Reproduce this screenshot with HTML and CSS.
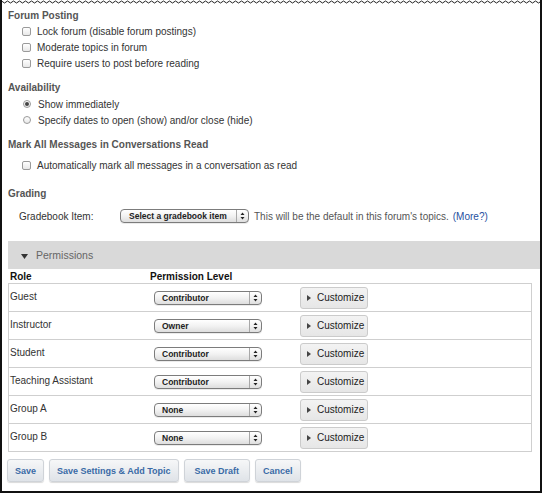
FILE: index.html
```html
<!DOCTYPE html>
<html>
<head>
<meta charset="utf-8">
<link rel="stylesheet" href="styles.css">
</head>
<body>
<div class="frame">
  <svg class="wave" width="542" height="4" viewBox="0 0 542 4">
    <path d="M0 2 Q1.5 0 3 2 T6 2 T9 2 T12 2 T15 2 T18 2 T21 2 T24 2 T27 2 T30 2 T33 2 T36 2 T39 2 T42 2 T45 2 T48 2 T51 2 T54 2 T57 2 T60 2 T63 2 T66 2 T69 2 T72 2 T75 2 T78 2 T81 2 T84 2 T87 2 T90 2 T93 2 T96 2 T99 2 T102 2 T105 2 T108 2 T111 2 T114 2 T117 2 T120 2 T123 2 T126 2 T129 2 T132 2 T135 2 T138 2 T141 2 T144 2 T147 2 T150 2 T153 2 T156 2 T159 2 T162 2 T165 2 T168 2 T171 2 T174 2 T177 2 T180 2 T183 2 T186 2 T189 2 T192 2 T195 2 T198 2 T201 2 T204 2 T207 2 T210 2 T213 2 T216 2 T219 2 T222 2 T225 2 T228 2 T231 2 T234 2 T237 2 T240 2 T243 2 T246 2 T249 2 T252 2 T255 2 T258 2 T261 2 T264 2 T267 2 T270 2 T273 2 T276 2 T279 2 T282 2 T285 2 T288 2 T291 2 T294 2 T297 2 T300 2 T303 2 T306 2 T309 2 T312 2 T315 2 T318 2 T321 2 T324 2 T327 2 T330 2 T333 2 T336 2 T339 2 T342 2 T345 2 T348 2 T351 2 T354 2 T357 2 T360 2 T363 2 T366 2 T369 2 T372 2 T375 2 T378 2 T381 2 T384 2 T387 2 T390 2 T393 2 T396 2 T399 2 T402 2 T405 2 T408 2 T411 2 T414 2 T417 2 T420 2 T423 2 T426 2 T429 2 T432 2 T435 2 T438 2 T441 2 T444 2 T447 2 T450 2 T453 2 T456 2 T459 2 T462 2 T465 2 T468 2 T471 2 T474 2 T477 2 T480 2 T483 2 T486 2 T489 2 T492 2 T495 2 T498 2 T501 2 T504 2 T507 2 T510 2 T513 2 T516 2 T519 2 T522 2 T525 2 T528 2 T531 2 T534 2 T537 2 T540 2 T543 2" fill="none" stroke="#222" stroke-width="1"/>
  </svg>
  <div class="content">
    <section class="sec sec-first">
      <h3 class="heading">Forum Posting</h3>
      <div class="opts">
        <label class="opt"><span class="cb"></span>Lock forum (disable forum postings)</label>
        <label class="opt"><span class="cb"></span>Moderate topics in forum</label>
        <label class="opt"><span class="cb"></span>Require users to post before reading</label>
      </div>
    </section>
    <section class="sec">
      <h3 class="heading">Availability</h3>
      <div class="opts opts-radio">
        <label class="opt"><span class="rb rb-on"></span>Show immediately</label>
        <label class="opt"><span class="rb"></span>Specify dates to open (show) and/or close (hide)</label>
      </div>
    </section>
    <section class="sec">
      <h3 class="heading">Mark All Messages in Conversations Read</h3>
      <div class="opts opts-mark">
        <label class="opt"><span class="cb"></span>Automatically mark all messages in a conversation as read</label>
      </div>
    </section>
    <section class="sec sec-grading">
      <h3 class="heading">Grading</h3>
      <div class="grade-row">
        <span class="grade-label">Gradebook Item:</span>
        <span class="select select-grade"><span class="sel-text">Select a gradebook item</span><span class="stepper"><svg width="5" height="8" viewBox="0 0 5 8"><path d="M2.5 0.5 L4.5 3 L0.5 3 Z M0.5 5 L4.5 5 L2.5 7.5 Z" fill="#222"/></svg></span></span>
        <span class="hint">This will be the default in this forum's topics.</span>
        <a class="more">(More?)</a>
      </div>
    </section>

    <div class="perm-bar"><svg class="tri-down" width="7" height="5" viewBox="0 0 7 5"><path d="M0 0 L7 0 L3.5 5 Z" fill="#333"/></svg><span>Permissions</span></div>

    <div class="perm-head">
      <span class="col-role">Role</span>
      <span class="col-level">Permission Level</span>
    </div>
    <div class="perm-table">
      <div class="perm-row"><span class="col-role">Guest</span><span class="col-level"><span class="select select-perm"><span class="sel-text">Contributor</span><span class="stepper"><svg width="5" height="8" viewBox="0 0 5 8"><path d="M2.5 0.5 L4.5 3 L0.5 3 Z M0.5 5 L4.5 5 L2.5 7.5 Z" fill="#222"/></svg></span></span></span><button class="cust"><svg width="4" height="6" viewBox="0 0 4 6"><path d="M0 0 L4 3 L0 6 Z" fill="#444"/></svg>Customize</button></div>
      <div class="perm-row"><span class="col-role">Instructor</span><span class="col-level"><span class="select select-perm"><span class="sel-text">Owner</span><span class="stepper"><svg width="5" height="8" viewBox="0 0 5 8"><path d="M2.5 0.5 L4.5 3 L0.5 3 Z M0.5 5 L4.5 5 L2.5 7.5 Z" fill="#222"/></svg></span></span></span><button class="cust"><svg width="4" height="6" viewBox="0 0 4 6"><path d="M0 0 L4 3 L0 6 Z" fill="#444"/></svg>Customize</button></div>
      <div class="perm-row"><span class="col-role">Student</span><span class="col-level"><span class="select select-perm"><span class="sel-text">Contributor</span><span class="stepper"><svg width="5" height="8" viewBox="0 0 5 8"><path d="M2.5 0.5 L4.5 3 L0.5 3 Z M0.5 5 L4.5 5 L2.5 7.5 Z" fill="#222"/></svg></span></span></span><button class="cust"><svg width="4" height="6" viewBox="0 0 4 6"><path d="M0 0 L4 3 L0 6 Z" fill="#444"/></svg>Customize</button></div>
      <div class="perm-row"><span class="col-role">Teaching Assistant</span><span class="col-level"><span class="select select-perm"><span class="sel-text">Contributor</span><span class="stepper"><svg width="5" height="8" viewBox="0 0 5 8"><path d="M2.5 0.5 L4.5 3 L0.5 3 Z M0.5 5 L4.5 5 L2.5 7.5 Z" fill="#222"/></svg></span></span></span><button class="cust"><svg width="4" height="6" viewBox="0 0 4 6"><path d="M0 0 L4 3 L0 6 Z" fill="#444"/></svg>Customize</button></div>
      <div class="perm-row"><span class="col-role">Group A</span><span class="col-level"><span class="select select-perm"><span class="sel-text">None</span><span class="stepper"><svg width="5" height="8" viewBox="0 0 5 8"><path d="M2.5 0.5 L4.5 3 L0.5 3 Z M0.5 5 L4.5 5 L2.5 7.5 Z" fill="#222"/></svg></span></span></span><button class="cust"><svg width="4" height="6" viewBox="0 0 4 6"><path d="M0 0 L4 3 L0 6 Z" fill="#444"/></svg>Customize</button></div>
      <div class="perm-row"><span class="col-role">Group B</span><span class="col-level"><span class="select select-perm"><span class="sel-text">None</span><span class="stepper"><svg width="5" height="8" viewBox="0 0 5 8"><path d="M2.5 0.5 L4.5 3 L0.5 3 Z M0.5 5 L4.5 5 L2.5 7.5 Z" fill="#222"/></svg></span></span></span><button class="cust"><svg width="4" height="6" viewBox="0 0 4 6"><path d="M0 0 L4 3 L0 6 Z" fill="#444"/></svg>Customize</button></div>
    </div>

    <div class="actions">
      <button class="act">Save</button>
      <button class="act">Save Settings &amp; Add Topic</button>
      <button class="act act-draft">Save Draft</button>
      <button class="act">Cancel</button>
    </div>
  </div>
</div>
</body>
</html>
```

FILE: styles.css
```css
* { box-sizing: border-box; }
html, body { margin: 0; padding: 0; background: #fff; }
body {
  font-family: "Liberation Sans", Arial, sans-serif;
  font-size: 10px;
  color: #333;
}
.frame {
  width: 542px;
  height: 493px;
  border-left: 2px solid #111;
  border-right: 2px solid #111;
  border-bottom: 2px solid #111;
  overflow: hidden;
}
.wave { display: block; margin-left: -2px; }
.content { padding: 5px 0 0 6px; }

.sec { margin-top: 10px; }
.sec-first { margin-top: 0; }
.heading {
  margin: 0;
  font-size: 10px;
  font-weight: bold;
  line-height: 14px;
  color: #555;
}
.opts { display: flex; flex-direction: column; }
.opts-radio { margin-top: 1px; }
.opts-mark { margin-top: 5px; }
.opt {
  display: flex;
  align-items: center;
  height: 16px;
  padding-left: 14px;
  color: #333;
}
.cb {
  width: 9px;
  height: 9px;
  border: 1px solid #9a9a9a;
  border-radius: 2px;
  background: linear-gradient(#fff, #e8e8e8);
  margin-right: 6px;
  flex: none;
}
.rb {
  width: 8px;
  height: 8px;
  border: 1px solid #9a9a9a;
  border-radius: 50%;
  background: linear-gradient(#fff, #e8e8e8);
  margin-left: 1px;
  margin-right: 7px;
  flex: none;
  display: flex;
  align-items: center;
  justify-content: center;
}
.rb-on::after {
  content: "";
  width: 4px;
  height: 4px;
  border-radius: 50%;
  background: #444;
}

.sec-grading { margin-top: 14px; }
.grade-row {
  display: flex;
  align-items: center;
  height: 20px;
  margin-top: 5px;
}
.grade-label { padding-left: 11px; width: 112px; color: #333; }
.select {
  display: flex;
  align-items: center;
  height: 14px;
  border: 1px solid #7c7c7c;
  border-radius: 4px;
  background: linear-gradient(#ffffff, #f2f2f2 50%, #dedede);
  box-shadow: 0 1px 0 rgba(0,0,0,0.08);
  flex: none;
}
.sel-text {
  flex: 1;
  font-family: "Liberation Sans", Arial, sans-serif;
  font-weight: bold;
  font-size: 8.5px;
  color: #222;
  padding-left: 8px;
  white-space: nowrap;
  overflow: hidden;
  line-height: 12px;
}
.stepper {
  width: 12px;
  height: 12px;
  border-left: 1px solid #a8a8a8;
  display: flex;
  align-items: center;
  justify-content: center;
}
.stepper svg { display: block; }
.select-grade { width: 129px; }
.hint { margin-left: 5px; color: #555; }
.more { margin-left: 4px; color: #1f4fa0; }

.perm-bar {
  margin-top: 15px;
  height: 28px;
  background: #d9d9d9;
  display: flex;
  align-items: center;
  padding-left: 13px;
  color: #666;
  font-size: 10.5px;
}
.perm-bar .tri-down { margin-right: 8px; margin-top: 2px; }

.perm-head {
  display: flex;
  align-items: center;
  height: 14px;
  font-weight: bold;
  color: #111;
  padding-left: 2px;
}
.col-role { width: 143px; flex: none; }
.col-level { width: 147px; flex: none; display: flex; }
.perm-head .col-role { width: 140px; }

.perm-table {
  width: 524px;
  border: 1px solid #cfcfcf;
  border-bottom: none;
}
.perm-row {
  display: flex;
  align-items: center;
  height: 28px;
  border-bottom: 1px solid #cfcfcf;
  padding-left: 1px;
  color: #333;
}
.perm-row .col-role { padding-bottom: 2px; }
.select-perm { width: 108px; margin-left: 1px; }
.select-perm .sel-text { padding-left: 7px; }
.cust {
  display: flex;
  align-items: center;
  height: 22px;
  width: 68px;
  padding: 0 0 0 6px;
  margin: 0;
  border: 1px solid #cbcbcb;
  border-radius: 3px;
  background: linear-gradient(#f3f3f3, #e6e6e6);
  font-family: "Liberation Sans", Arial, sans-serif;
  font-size: 10px;
  color: #222;
}
.cust svg { margin-right: 6px; }

.actions {
  display: flex;
  gap: 5px;
  margin-top: 7px;
  margin-left: -1px;
}
.act {
  height: 23px;
  padding: 0 7px;
  margin: 0;
  border: 1px solid #cfd3d8;
  border-radius: 3px;
  background: linear-gradient(#f6f7f8, #dfe3e8);
  box-shadow: 0 1px 1px rgba(0,0,0,0.15);
  font-family: "Liberation Sans", Arial, sans-serif;
  font-size: 9px;
  font-weight: bold;
  color: #3a6aa6;
}
.act-draft { padding: 0 10px; }
```
